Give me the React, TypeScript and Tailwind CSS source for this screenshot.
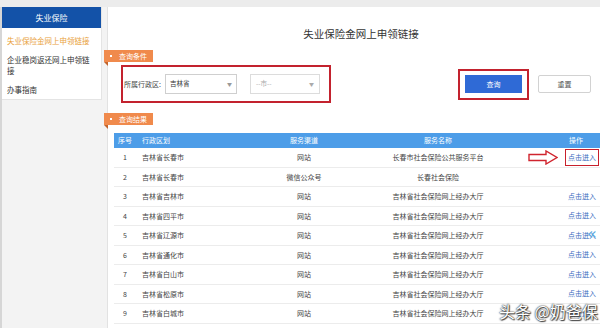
import React from "react";

const rows = [
  { n: "1", area: "吉林省长春市", ch: "网站", name: "长春市社会保险公共服务平台", link: true, arrow: true },
  { n: "2", area: "吉林省长春市", ch: "微信公众号", name: "长春社会保险", link: false },
  { n: "3", area: "吉林省吉林市", ch: "网站", name: "吉林省社会保险网上经办大厅", link: true },
  { n: "4", area: "吉林省四平市", ch: "网站", name: "吉林省社会保险网上经办大厅", link: true },
  { n: "5", area: "吉林省辽源市", ch: "网站", name: "吉林省社会保险网上经办大厅", link: true },
  { n: "6", area: "吉林省通化市", ch: "网站", name: "吉林省社会保险网上经办大厅", link: true },
  { n: "7", area: "吉林省白山市", ch: "网站", name: "吉林省社会保险网上经办大厅", link: true },
  { n: "8", area: "吉林省松原市", ch: "网站", name: "吉林省社会保险网上经办大厅", link: true },
  { n: "9", area: "吉林省白城市", ch: "网站", name: "吉林省社会保险网上经办大厅", link: true },
];

function Tag({ label }: { label: string }) {
  return (
    <div className="relative -ml-[4px] w-[49px] h-[12px] bg-[#f08a4c] flex items-center text-white text-[7px] leading-none">
      <span className="ml-[6px] w-[2px] h-[2px] bg-white"></span>
      <span className="ml-[7px]">{label}</span>
      <span className="absolute left-0 top-[12px] w-0 h-0 border-t-[4px] border-t-[#c2642c] border-l-[4px] border-l-transparent"></span>
    </div>
  );
}

function Arrow() {
  return (
    <svg width="30" height="15" viewBox="0 0 30 15">
      <path d="M1 4.5 H18 V1 L29 7.5 L18 14 V10.5 H1 Z" fill="#fff" stroke="#d0242e" strokeWidth="1.4" strokeLinejoin="miter" />
    </svg>
  );
}

export default function App() {
  return (
    <div className="w-[600px] h-[328px] overflow-hidden bg-[#f3f3f3] font-['Noto_Sans_CJK_SC','Liberation_Sans',sans-serif] relative">
      <div className="h-[7px] bg-[#ececec]"></div>
      <div className="flex h-[321px]">
        {/* Sidebar */}
        <div className="w-[102px] shrink-0 border-l-[2px] border-l-[#d6d6d6] flex flex-col">
          <div className="bg-white border-r border-b border-[#e4e4e4] h-[93px]">
            <div className="h-[21px] bg-[#1352a8] flex items-center justify-center text-white text-[8px]">失业保险</div>
            <div className="px-[5px] pt-[5px] text-[7.5px] leading-[11px]">
              <div className="text-[#e9a23c] py-[2px]">失业保险金网上申领链接</div>
              <div className="text-[#333] mt-[6px] leading-[11px]">企业稳岗返还网上申领链接</div>
              <div className="text-[#333] mt-[8px]">办事指南</div>
            </div>
          </div>
        </div>
        {/* Main */}
        <div className="ml-[5px] flex-1 min-w-0 bg-white border-l border-[#e2e2e2] flex flex-col relative">
          <div className="pt-[20px] h-[34px] leading-[14px] text-[10.5px] text-[#333] text-center pl-[14px]">失业保险金网上申领链接</div>
          <div className="mt-[9px]">
            <Tag label="查询条件" />
          </div>
          <div className="mt-[3px] h-[38px] flex items-center">
            <div className="ml-[13px] shrink-0 w-[210px] h-[38px] border-[2px] border-[#c3222e] flex items-center">
              <span className="ml-[1px] text-[7px] text-[#444]">所属行政区:</span>
              <div className="ml-[4px] w-[72px] h-[20px] border border-[#cfcfcf] flex items-center justify-between px-[4px] text-[6.5px] text-[#333]">
                <span>吉林省</span>
                <span className="text-[#999] text-[5px]">▼</span>
              </div>
              <div className="ml-[13px] w-[70px] h-[20px] border border-[#dcdcdc] flex items-center justify-between px-[5px] text-[6.5px] text-[#aaa]">
                <span>--市--</span>
                <span className="text-[#aaa] text-[5px]">▼</span>
              </div>
            </div>
            <div className="ml-[127px] shrink-0 w-[71px] h-[31px] border-[2px] border-[#c3222e] flex items-center justify-center">
              <div className="w-[57px] h-[18px] bg-[#2f6ad6] flex items-center justify-center text-white text-[7px]">查询</div>
            </div>
            <div className="ml-[9px] shrink-0 w-[53px] h-[18px] border border-[#d2d2d2] rounded-[2px] flex items-center justify-center text-[#555] text-[7px]">重置</div>
          </div>
          <div className="mt-[10px]">
            <Tag label="查询结果" />
          </div>
          <div className="mt-[8px] ml-[6px] w-[528px] shrink-0 text-[7px] text-[#444]">
            <div className="h-[15px] bg-[#4d9de8] text-white flex items-center">
              <div className="w-[22px] shrink-0 text-center">序号</div>
              <div className="w-[118px] shrink-0 pl-[6px]">行政区划</div>
              <div className="w-[100px] shrink-0 text-center">服务渠道</div>
              <div className="w-[168px] shrink-0 text-center">服务名称</div>
              <div className="w-[120px] shrink-0 text-center pr-[12px]">操作</div>
            </div>
            {rows.map((r) => (
              <div key={r.n} className="h-[19.5px] border-b border-[#ececec] flex items-center">
                <div className="w-[22px] shrink-0 text-center">{r.n}</div>
                <div className="w-[118px] shrink-0 pl-[6px]">{r.area}</div>
                <div className="w-[100px] shrink-0 text-center">{r.ch}</div>
                <div className="w-[168px] shrink-0 text-center">{r.name}</div>
                <div className="w-[120px] shrink-0 flex items-center pl-[6px] gap-[7px]">
                  <div className="w-[30px] h-[15px] flex items-center">{r.arrow ? <Arrow /> : null}</div>
                  {r.link ? (
                    <span
                      className={
                        "px-[2px] py-[3px] leading-[9px] text-[#3a6cc0] border-[1.5px] " +
                        (r.arrow ? "border-[#c8202c]" : "border-transparent")
                      }
                    >
                      点击进入
                    </span>
                  ) : null}
                </div>
              </div>
            ))}
          </div>
        </div>
      </div>
      {/* chevron overlay */}
      <div className="absolute left-[587px] top-[226px] text-[16px] leading-none text-[#5aa8e0] font-['DejaVu_Sans',sans-serif]">«</div>
      {/* watermark */}
      <div className="absolute left-[499px] top-[302px] text-[16px] leading-[19px] text-white [text-shadow:0_0_1px_#333,0_0_2px_#333,1px_1px_1px_#444]">
        头条 @奶爸保
      </div>
    </div>
  );
}
